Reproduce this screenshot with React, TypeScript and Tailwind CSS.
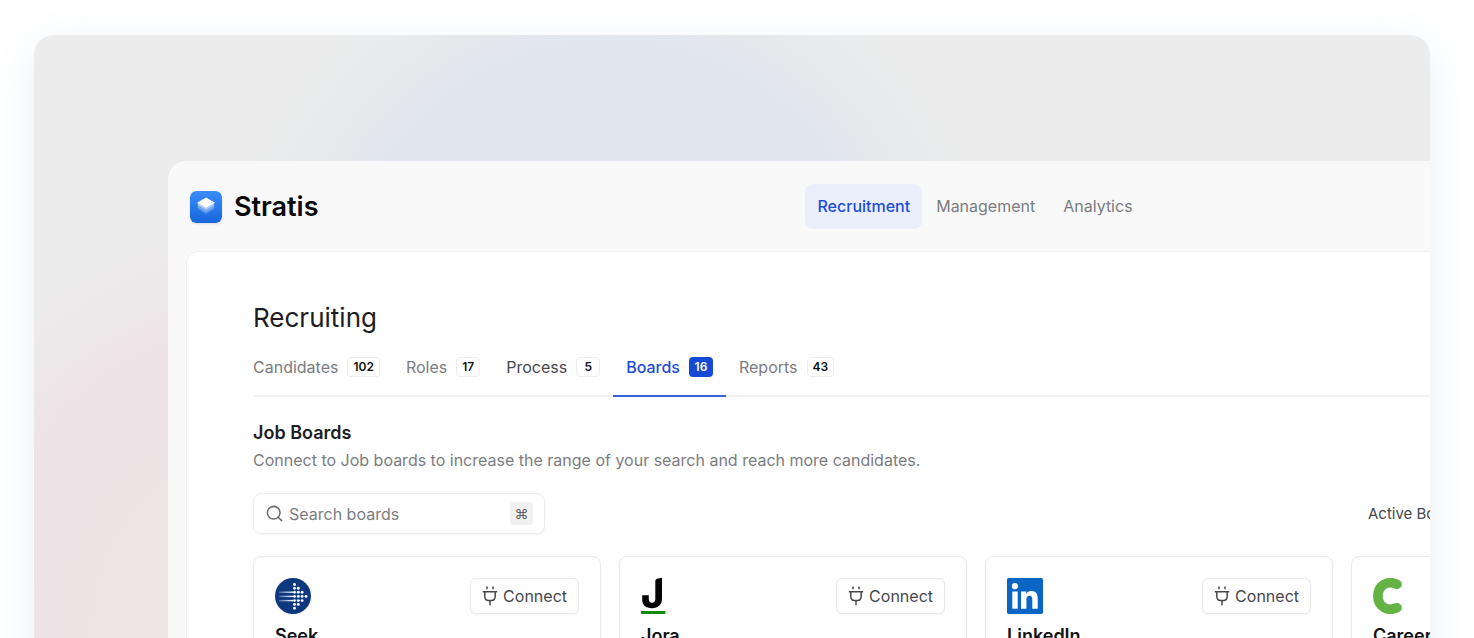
import type { ReactNode } from "react";
import { Search } from "lucide-react";

const navItems = ["Recruitment", "Management", "Analytics"];

const tabs = [
  { label: "Candidates", count: 102, tone: "muted" },
  { label: "Roles", count: 17, tone: "muted" },
  { label: "Process", count: 5, tone: "dark" },
  { label: "Boards", count: 16, tone: "active" },
  { label: "Reports", count: 43, tone: "muted" },
];

const tabTone: Record<string, string> = {
  muted: "border-transparent text-[#7b7c81]",
  dark: "border-transparent text-[#46474d]",
  active: "border-[#3762d8] font-medium text-[#1d4ed8]",
};

function StratisLogo() {
  return (
    <svg viewBox="0 0 32 32" className="size-8 rounded-md shadow-sm" aria-hidden="true">
      <defs>
        <linearGradient id="stratis-bg" x1="0" y1="0" x2="0" y2="1">
          <stop offset="0" stopColor="#3a8cf9" />
          <stop offset="1" stopColor="#1767dc" />
        </linearGradient>
      </defs>
      <rect width="32" height="32" rx="6" fill="url(#stratis-bg)" />
      <path d="M7.800 16.500L16 21.200l8.200-4.700v1.500L16 22.900l-8.200-4.900z" fill="#fff" opacity=".2" />
      <path d="M7.800 14.200L16 19l8.200-4.800v2.300L16 21.200l-8.200-4.700z" fill="#fff" opacity=".38" />
      <path d="M7.800 12L16 16.800l8.200-4.800v2.200L16 19l-8.200-4.800z" fill="#fff" opacity=".6" />
      <path d="M16 6.600l9 5.100-9 5.200-9-5.200z" fill="#fff" />
    </svg>
  );
}

const seekDots: [number, number][] = [
  [19.500, 6.500], [19.500, 10.300], [23.300, 10.300],
  [19.500, 14.200], [23.300, 14.200], [27.100, 14.200],
  [19.500, 18.400], [23.300, 18.400], [27.100, 18.400], [31, 18.400],
  [19.500, 22.600], [23.300, 22.600], [27.100, 22.600],
  [19.500, 26.400], [23.300, 26.400], [19.500, 30.200],
];

function SeekLogo() {
  return (
    <svg viewBox="0 0 36 36" className="size-9" aria-hidden="true">
      <defs>
        <linearGradient id="seek-trail" x1="0" y1="0" x2="1" y2="0">
          <stop offset="0" stopColor="#fff" stopOpacity=".25" />
          <stop offset="1" stopColor="#fff" />
        </linearGradient>
      </defs>
      <circle cx="18" cy="18" r="18" fill="#0d3880" />
      {[14.200, 18.400, 22.600].map((y) => (
        <rect key={y} x="4" y={y - 0.7} width="14" height="1.400" fill="url(#seek-trail)" />
      ))}
      {seekDots.map(([x, y]) => (
        <circle key={`${x}-${y}`} cx={x} cy={y} r="1.450" fill="#fff" />
      ))}
    </svg>
  );
}

function JoraLogo() {
  return (
    <svg viewBox="0 0 36 36" className="size-9" aria-hidden="true">
      <path
        d="M14.300 3.200C14.300 1.200 16.600 0 21 0v20.500c0 6.300-4 9.700-10 9.700S1.200 27 1.200 21.500v-4.300h6.600v4.100c0 2.200 1.200 3.400 3.200 3.400s3.300-1.200 3.300-3.500z"
        fill="#050505"
      />
      <rect x="0" y="33" width="24.500" height="3" rx=".8" fill="#148a0e" />
    </svg>
  );
}

function LinkedInLogo() {
  return (
    <svg viewBox="0 0 36 36" className="size-9" aria-hidden="true">
      <rect width="36" height="36" rx="1.800" fill="#0a66c2" />
      <g fill="#fff">
        <circle cx="8" cy="8.200" r="3.100" />
        <rect x="5.300" y="13.500" width="5.400" height="17.200" />
        <path d="M14 13.500h5.100v2.400c.9-1.700 2.800-2.800 5.200-2.800 5.100 0 6.400 3.300 6.400 8.200v9.400h-5.400v-8.500c0-2.500-.3-4.400-2.800-4.400s-3.100 1.800-3.100 4.300v8.600H14z" />
      </g>
    </svg>
  );
}

function CareerLogo() {
  return (
    <svg viewBox="0 0 36 36" className="size-9" aria-hidden="true">
      <path
        d="M24 6.300C13.500 1.500 4.900 8.500 4.900 18s8.600 16.500 19.100 11.700"
        fill="none"
        stroke="#65b345"
        strokeWidth="9.600"
        strokeLinecap="round"
      />
    </svg>
  );
}

function PlugIcon() {
  return (
    <svg viewBox="0 0 16 20" className="h-5 w-4 flex-none" fill="none" stroke="currentColor" strokeWidth="1.500" aria-hidden="true">
      <path d="M5 .6v2.600M11 .6v2.600M.8 5.800h14.400M2.800 5.800v4.400c0 2.600 1.500 4.200 3.700 4.200h3c2.200 0 3.700-1.600 3.700-4.200V5.800M8 14.400v4.900" />
    </svg>
  );
}

const boards: { name: string; logo: ReactNode }[] = [
  { name: "Seek", logo: <SeekLogo /> },
  { name: "Jora", logo: <JoraLogo /> },
  { name: "LinkedIn", logo: <LinkedInLogo /> },
  { name: "CareerOne", logo: <CareerLogo /> },
];

function BoardCard({ name, logo }: { name: string; logo: ReactNode }) {
  return (
    <article className="rounded-lg border border-[#ebebec] bg-white px-[21px] pt-[21px] pb-10 shadow-xs">
      <div className="flex items-start justify-between">
        {logo}
        <button
          type="button"
          className="flex h-9 items-center gap-[5px] rounded-md border border-[#e9e9eb] bg-white px-[11px] text-base text-[#46474d] shadow-xs"
        >
          <PlugIcon />
          Connect
        </button>
      </div>
      <h3 className="mt-[10px] text-lg leading-6 font-semibold text-[#111114]">{name}</h3>
    </article>
  );
}

export default function App() {
  return (
    <div className="h-screen overflow-hidden bg-white pt-[35px] pr-11 pl-[34px] font-['Inter',sans-serif]">
      <div className="min-h-full overflow-hidden rounded-t-[20px] bg-[#ececec] bg-[radial-gradient(circle_395px_at_575px_280px,#e0e5ef_0%,#e1e5ee_68%,#e6e9eb_80%,transparent_100%),radial-gradient(circle_430px_at_250px_600px,#eee6e5_0%,#eee4e7_60%,#eee4e8_72%,#ece8e9_84%,transparent_100%)] pt-[126px] pl-[134px] shadow-[0_12px_44px_rgba(80,130,190,0.12)]">
        <div className="w-[calc(100%+354px)] rounded-tl-[18px] bg-[#f9f9f9] px-[18px]">
          <header className="grid h-[90px] grid-cols-[1fr_auto_1fr] items-center">
            <a href="#home" className="ml-1 flex items-center gap-3 pt-0.5 text-[27px] leading-8 font-semibold text-[#09090b]">
              <StratisLogo />
              Stratis
            </a>
            <nav className="flex text-base" aria-label="Main">
              {navItems.map((item, i) => (
                <a
                  key={item}
                  href={`#${item.toLowerCase()}`}
                  className={
                    i === 0
                      ? "flex h-[45px] items-center rounded-lg bg-[#ebeffb] px-3 font-medium text-[#1d4ed8]"
                      : "flex h-[45px] items-center px-[14px] text-[#7b7c81]"
                  }
                >
                  {item}
                </a>
              ))}
            </nav>
          </header>

          <main className="rounded-t-xl border border-b-0 border-[#f0f0f1] bg-white px-[66px] pt-12">
            <h1 className="text-[26px] leading-9 text-[#1d1d22]">Recruiting</h1>
            <nav className="mt-[9px] border-b-2 border-[#f1f1f2]" aria-label="Recruiting sections">
              <div className="-mb-0.5 -ml-[13px] flex">
                {tabs.map((tab) => (
                  <a
                    key={tab.label}
                    href={`#${tab.label.toLowerCase()}`}
                    className={`flex h-[52px] items-center gap-[9px] border-b-2 px-[13px] pb-1.5 text-base ${tabTone[tab.tone]}`}
                  >
                    {tab.label}
                    <span
                      className={
                        tab.tone === "active"
                          ? "flex h-5 min-w-6 items-center justify-center rounded bg-[#1649d6] px-[5px] text-xs font-semibold text-white"
                          : "flex h-5 min-w-6 items-center justify-center rounded border border-[#ededee] px-[5px] text-xs font-semibold text-[#111114]"
                      }
                    >
                      {tab.count}
                    </span>
                  </a>
                ))}
              </div>
            </nav>

            <section className="mt-[22px]">
              <h2 className="text-lg leading-7 font-semibold text-[#1d1d22]">Job Boards</h2>
              <p className="text-base leading-[26px] text-[#7b7c81]">
                Connect to Job boards to increase the range of your search and reach more candidates.
              </p>
              <div className="mt-5 flex items-center justify-between">
                <label className="flex h-[41px] w-[292px] items-center gap-[5px] rounded-lg border border-[#ebebec] px-[11px] shadow-xs">
                  <Search className="size-[19px] flex-none text-[#6b6c72]" strokeWidth={1.9} aria-hidden="true" />
                  <input
                    type="text"
                    aria-label="Search boards"
                    placeholder="Search boards"
                    className="min-w-0 flex-1 bg-transparent text-base text-[#46474d] outline-none placeholder:text-[#7b7c81]"
                  />
                  <kbd className="flex size-[23px] items-center justify-center rounded bg-[#f1f1f1] font-['Inter',sans-serif] text-sm text-[#5c5d63]">
                    ⌘
                  </kbd>
                </label>
                <button type="button" className="w-[331px] pt-0.5 text-left text-[15px] text-[#46474d]">
                  Active Boards
                </button>
              </div>
              <div className="mt-[22px] grid grid-cols-4 gap-[18px]">
                {boards.map((board) => (
                  <BoardCard key={board.name} name={board.name} logo={board.logo} />
                ))}
              </div>
            </section>
          </main>
        </div>
      </div>
    </div>
  );
}
